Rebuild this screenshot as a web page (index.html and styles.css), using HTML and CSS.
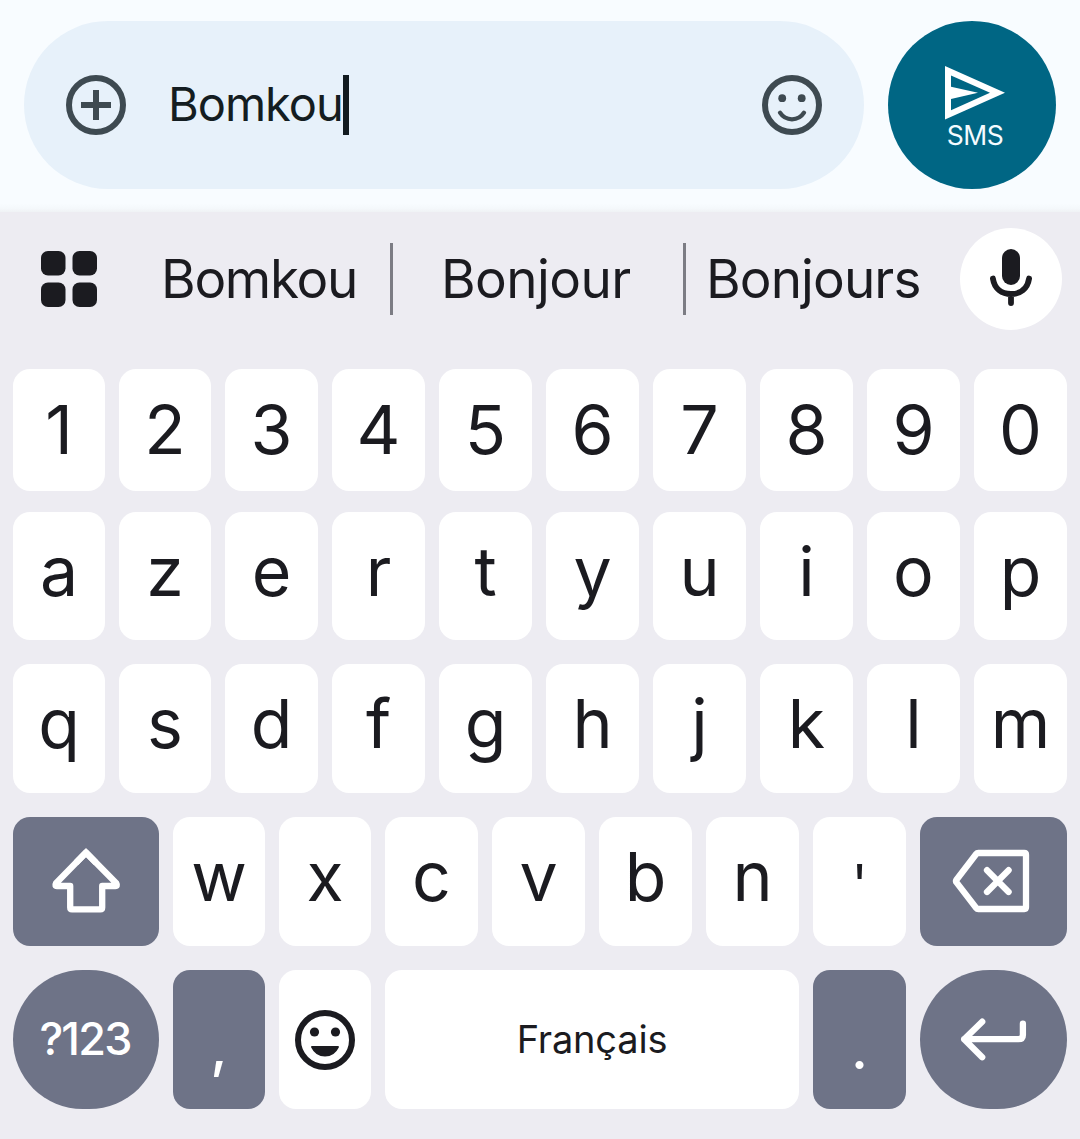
FILE: index.html
```html
<!DOCTYPE html>
<html lang="fr">
<head>
<meta charset="utf-8">
<title>Messages</title>
<link rel="stylesheet" href="styles.css">
</head>
<body>
<header class="composer">
  <div class="field">
    <svg class="icon-60" viewBox="0 0 60 60"><circle cx="30" cy="30" r="27"/><path d="M15 30H45M30 15V45"/></svg>
    <span class="draft">Bomkou</span><i class="caret"></i>
    <svg class="icon-60 smile" viewBox="0 0 60 60"><circle cx="30" cy="30" r="27"/><circle class="dot" cx="20.2" cy="23.2" r="3.9"/><circle class="dot" cx="39.7" cy="23.2" r="3.9"/><path class="mouth" d="M18 37.7Q22.2 44.3 30 44.3T42 37.7"/></svg>
  </div>
  <button class="send">
    <svg width="60" height="54" viewBox="0 0 60 54"><path fill-rule="evenodd" d="M0 0L60 26.8L0 53.6ZM6 9.5V20.7L33 26.8L6 33V44.2L45 26.8Z"/></svg>
    <span>SMS</span>
  </button>
</header>
<main class="keyboard">
  <div class="suggestions">
    <svg class="apps" width="56" height="56" viewBox="0 0 56 56"><rect width="24.5" height="24.5" rx="7"/><rect x="31.5" width="24.5" height="24.5" rx="7"/><rect y="31.5" width="24.5" height="24.5" rx="7"/><rect x="31.5" y="31.5" width="24.5" height="24.5" rx="7"/></svg>
    <span class="word w1">Bomkou</span>
    <span class="word w2">Bonjour</span>
    <span class="word w3">Bonjours</span>
    <button class="mic"><svg width="102" height="102" viewBox="0 0 102 102"><rect x="42" y="21" width="18" height="36" rx="9"/><path d="M32.9 50.500C34.500 61 42 66 51 66S67.500 61 69.100 50.500M51 67V75"/></svg></button>
  </div>
  <div class="row digits"><b>1</b><b>2</b><b>3</b><b>4</b><b>5</b><b>6</b><b>7</b><b>8</b><b>9</b><b>0</b></div>
  <div class="row upper"><b>a</b><b>z</b><b>e</b><b>r</b><b>t</b><b>y</b><b>u</b><b>i</b><b>o</b><b>p</b></div>
  <div class="row home"><b>q</b><b>s</b><b>d</b><b>f</b><b>g</b><b>h</b><b>j</b><b>k</b><b>l</b><b>m</b></div>
  <div class="row lower">
    <b class="dark icon"><svg width="146" height="129" viewBox="0 0 146 129"><path d="M73 35.500L43 66.300Q41.500 69 44 69H57.200V90.500Q57.200 92.300 59 92.300H87.400Q89.200 92.300 89.200 90.500V69H102.300Q104.800 69 103.300 66.300Z" stroke-linejoin="round"/><path d="M63 45.800L73 35.500L83 45.800"/></svg></b>
    <b>w</b><b>x</b><b>c</b><b>v</b><b>b</b><b>n</b><b class="apostrophe">'</b>
    <b class="dark icon"><svg width="147" height="129" viewBox="0 0 147 129"><path stroke-linejoin="round" d="M58.300 36H104.300Q106 36 106 37.700V90.300Q106 92 104.300 92H58.300Q57 92 56.200 91L36.300 65.200Q35.600 64.100 36.300 63L56.200 37Q57 36 58.300 36Z"/><path stroke-linecap="round" d="M67 53.200L88.600 75M88.600 53.200L67 75"/></svg></b>
  </div>
  <div class="row bottom">
    <b class="dark round symbols">?123</b>
    <b class="dark punct comma">,</b>
    <b class="icon emoji"><svg width="60" height="60" viewBox="0 0 60 60"><circle cx="30" cy="30" r="27"/><circle class="solid" cx="19.500" cy="22" r="4.600"/><circle class="solid" cx="40.500" cy="22" r="4.600"/><path class="solid" d="M17 36H43Q44.600 36 43.800 37.500Q39.500 46.500 30 46.500T16.200 37.500Q15.400 36 17 36Z"/></svg></b>
    <b class="space">Français</b>
    <b class="dark punct">.</b>
    <b class="dark round icon"><svg width="147" height="139" viewBox="0 0 147 139"><path stroke-linecap="round" stroke-linejoin="round" d="M62.200 51.700L44.200 69.200L62.200 87.200M44.200 69.200H98.300Q102.900 69.200 102.900 65V53.700"/></svg></b>
  </div>
</main>
</body>
</html>
```
FILE: styles.css
```css
* { box-sizing: border-box; }
body {
  margin: 0;
  width: 1080px;
  height: 1139px;
  overflow: hidden;
  background: #edecf2;
  font-family: Inter, Roboto, sans-serif;
  color: #1b1b20;
}
button { border: 0; padding: 0; font: inherit; }
svg { display: block; flex: none; }

.composer {
  height: 212px;
  padding: 21px 24px 0;
  display: flex;
  gap: 24px;
  background: linear-gradient(#f8fcff 0 203px, #f5f9fc 208px, #eff2f5 212px);
}
.field {
  width: 840px;
  height: 168px;
  border-radius: 84px;
  padding: 0 42px;
  display: flex;
  align-items: center;
  background: #e7f1fa;
}
.icon-60 { width: 60px; height: 60px; fill: none; stroke: #3e4a51; stroke-width: 6; }
.icon-60 .dot { fill: #3e4a51; stroke: none; }
.icon-60 .mouth { stroke-width: 4.3; stroke-linecap: round; }
.draft { margin-left: 42px; width: 175px; padding-bottom: 2px; font-size: 47px; line-height: 60px; color: #141d21; white-space: nowrap; letter-spacing: -1px; }
.caret { width: 6px; height: 60px; background: #121b20; }
.smile { margin-left: auto; }
.send {
  width: 168px;
  height: 168px;
  border-radius: 50%;
  padding-top: 45px;
  display: flex;
  flex-direction: column;
  align-items: center;
  background: #006684;
  color: #f4fbff;
}
.send svg { fill: #fff; margin-left: 6px; }
.send span { margin-left: 6px; font-size: 26.5px; line-height: 30px; letter-spacing: -0.4px; }

.keyboard { height: 927px; padding: 16px 13px 0; }
.suggestions { height: 102px; margin-bottom: 39px; display: flex; align-items: center; }
.apps { margin-left: 28px; fill: #1b1b20; }
.word { height: 72px; font-size: 53px; line-height: 72px; white-space: nowrap; }
.w1 { width: 296px; padding-left: 64px; border-right: 3px solid #7c7c84; letter-spacing: -1.3px; }
.w2 { width: 293px; padding-left: 48px; border-right: 3px solid #7c7c84; letter-spacing: -0.6px; }
.w3 { width: 274px; padding-left: 20px; letter-spacing: -0.9px; }
.mic { width: 102px; height: 102px; border-radius: 50%; background: #fff; }
.mic svg { fill: #1b1b20; }
.mic path { fill: none; stroke: #1b1b20; stroke-width: 5.8; stroke-linecap: round; }

.row { display: grid; grid-template-columns: 92px 92px repeat(8, 93px); gap: 14px; }
.row b {
  display: flex;
  align-items: center;
  justify-content: center;
  border-radius: 17px;
  background: #fff;
  font-size: 68px;
  font-weight: 400;
  line-height: 1;
  padding-bottom: 11px;
}
.row .dark { background: #6e7387; color: #fff; }
.row .icon { padding: 0; }
.row .icon svg { fill: none; stroke: #fff; stroke-width: 6.3; }
.digits { height: 122px; margin-bottom: 21px; }
.row.digits b { padding-bottom: 2px; }
.upper { height: 128px; margin-bottom: 24px; }
.home { height: 129px; margin-bottom: 24px; }
.lower, .bottom { height: 129px; margin-bottom: 24px; grid-template-columns: 146px 92px 92px repeat(5, 93px) 147px; }
.row .apostrophe { font-size: 54px; padding: 5px 0 0; }
.bottom { height: 139px; margin: 0; grid-template-columns: 146px 92px 92px 414px 93px 147px; }
.row .round { border-radius: 69.5px; }
.row .symbols { font-size: 45px; font-weight: 500; letter-spacing: -1.8px; padding: 0 2px 3px 0; }
.row .punct { padding: 19px 0 0; font-size: 56px; font-weight: 500; }
.row .comma { padding-top: 15px; }
.row .space { font-size: 38px; padding: 0 0 2px; letter-spacing: -0.2px; }
.row .emoji svg { stroke: #1b1b20; stroke-width: 6; }
.row .emoji .solid { fill: #1b1b20; stroke: none; }
```
